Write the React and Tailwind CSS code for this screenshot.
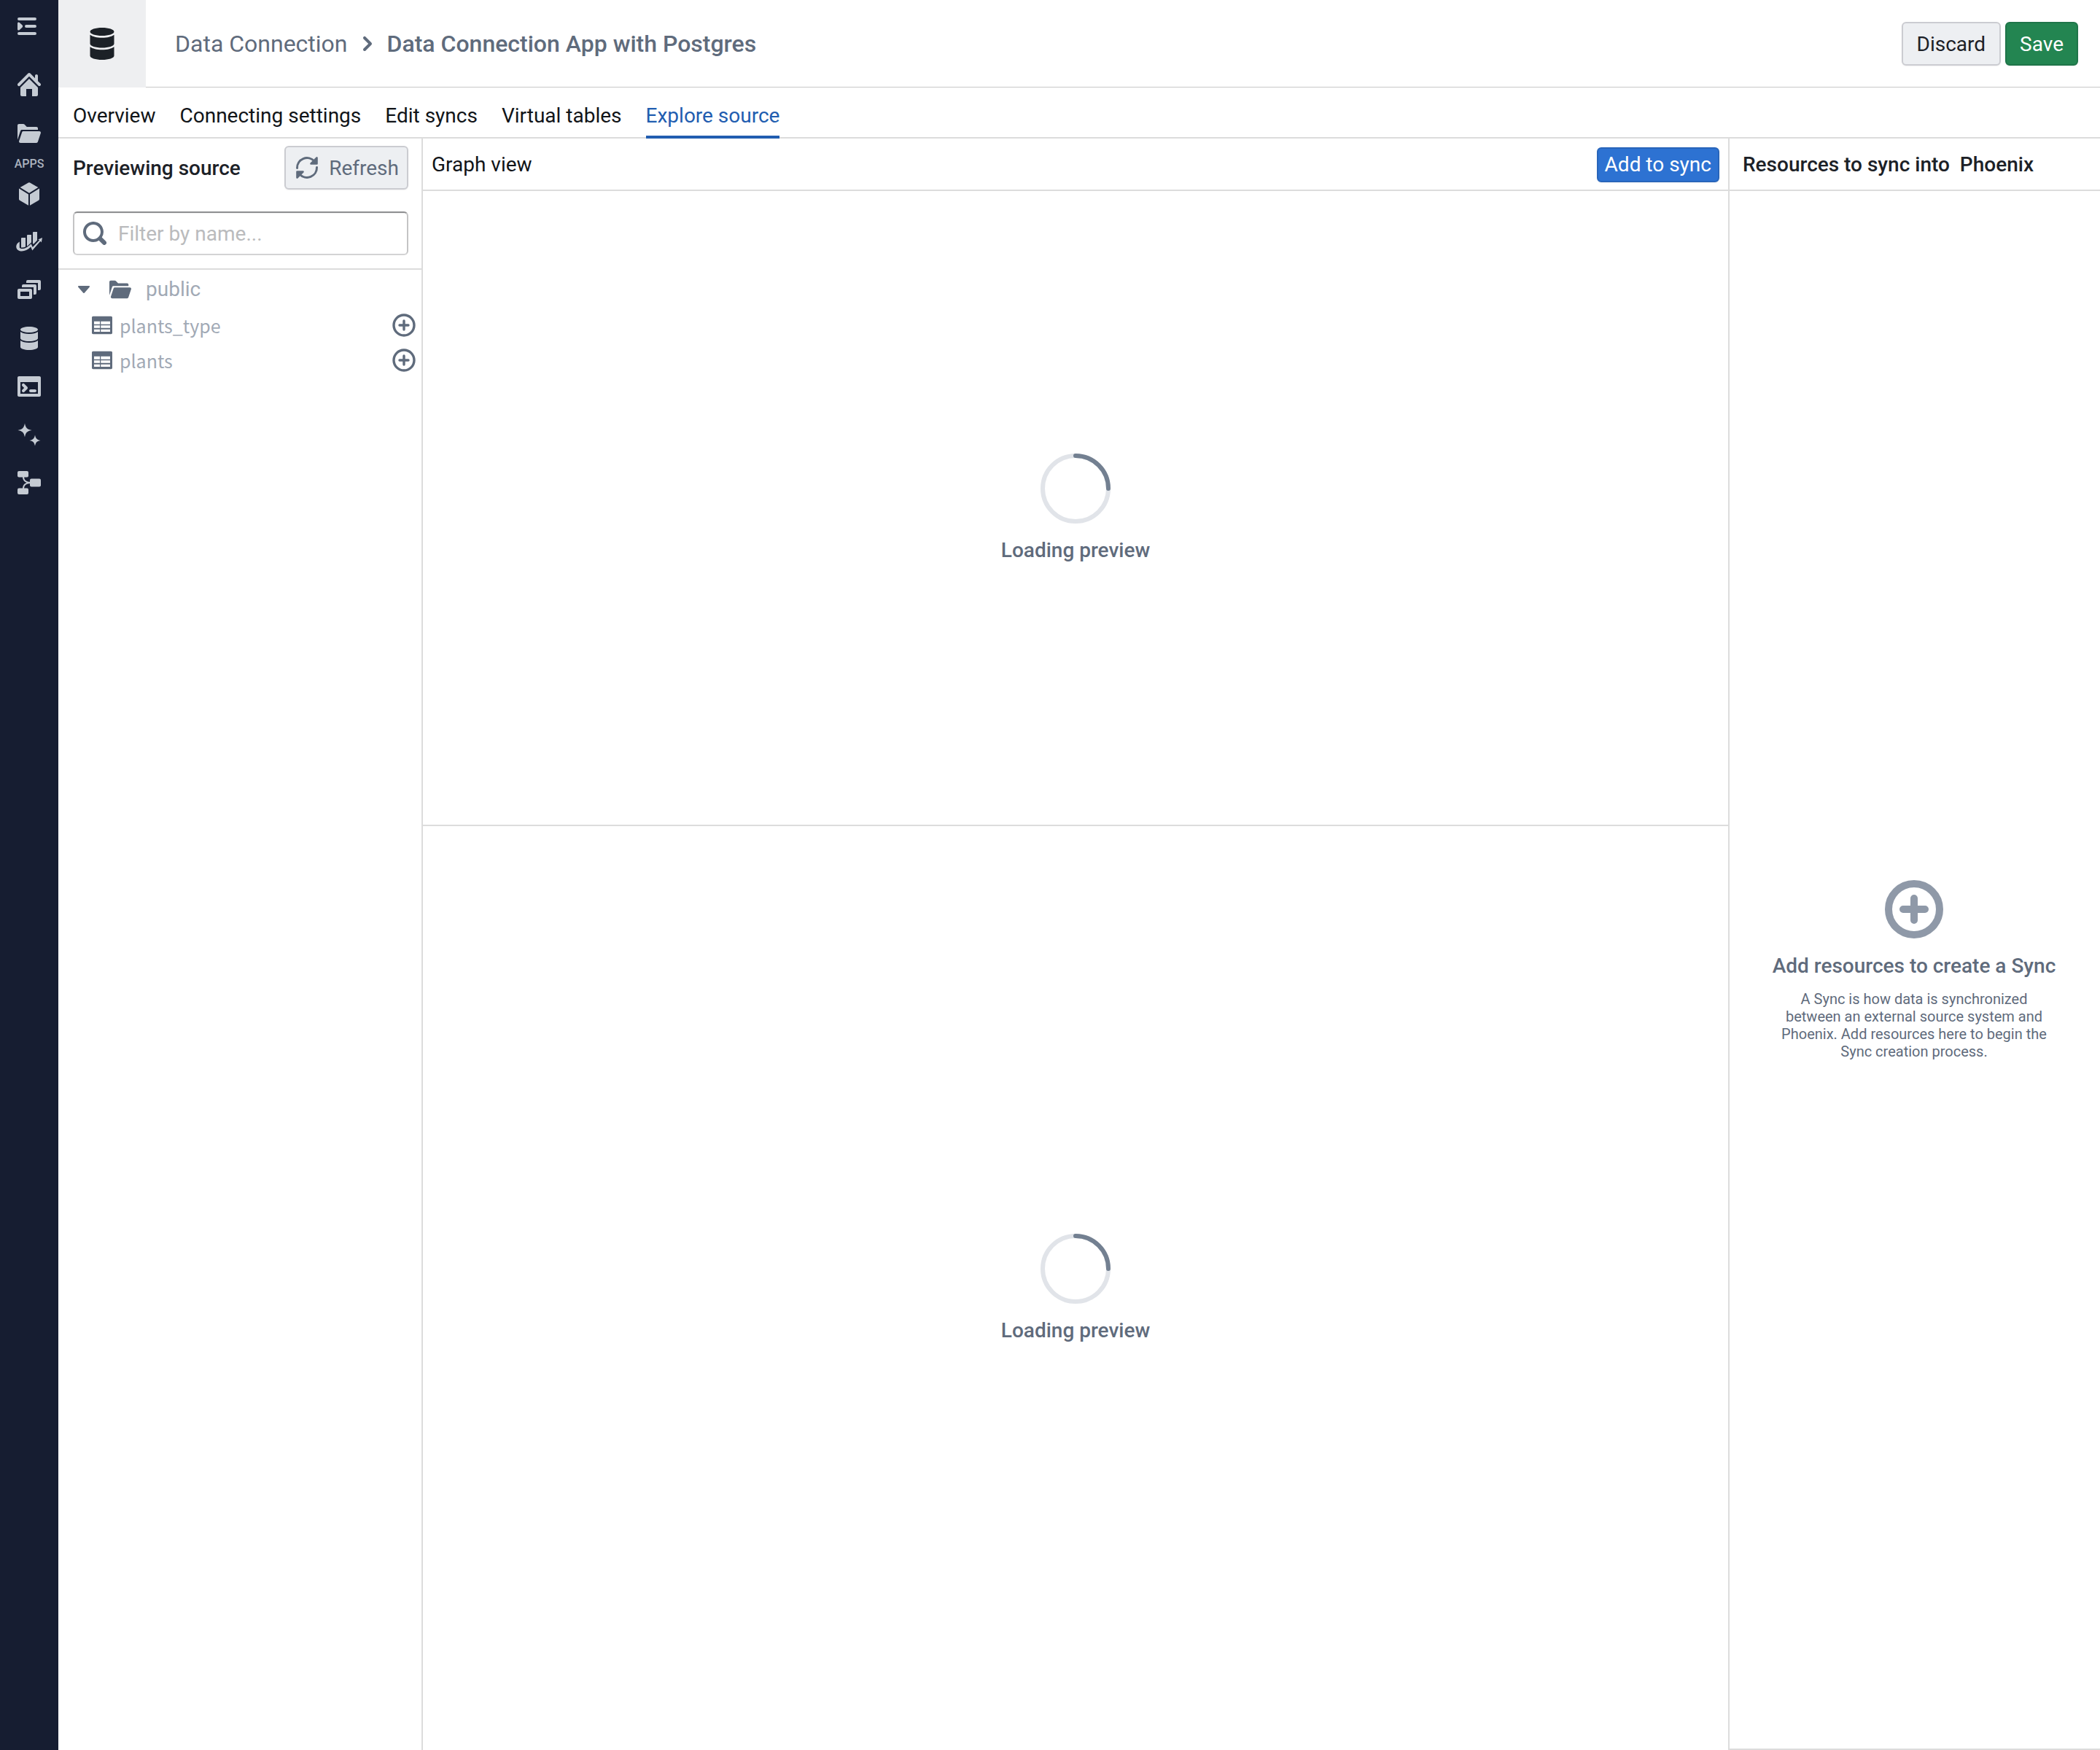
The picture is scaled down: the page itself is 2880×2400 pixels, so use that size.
const PATHS = {
  menu: "M1 0H12A1 1 0 0112 2H1A1 1 0 011 0zM6 5H12A1 1 0 0112 7H6A1 1 0 016 5zM1 10H12A1 1 0 0112 12H1A1 1 0 011 10zM0 4C0 3.2.9 3 1.4 3.5L3.3 5.3C3.7 5.7 3.7 6.3 3.3 6.7L1.4 8.5C.9 9 0 8.8 0 8z",
  home: "M2 10v5c0 .55.45 1 1 1h3v-5h4v5h3c.55 0 1-.45 1-1v-5L8 4l-6 6zm13.71-2.71L14 5.59V2c0-.55-.45-1-1-1s-1 .45-1 1v1.59L8.71.29C8.53.11 8.28 0 8 0s-.53.11-.71.29l-7 7a1.003 1.003 0 001.42 1.42L8 2.41l6.29 6.29c.18.18.43.3.71.3a1.003 1.003 0 00.71-1.71z",
  folder:
    "M2.06 6.69c.14-.4.5-.69.94-.69h11V5c0-.55-.45-1-1-1H6.41l-1.7-1.71A.997.997 0 004 2H1c-.55 0-1 .45-1 1v9.84l2.05-6.15h.01zM16 8c0-.55-.45-1-1-1H4a.99.99 0 00-.94.69l-2 6c-.04.09-.06.2-.06.31 0 .55.45 1 1 1h11c.44 0 .81-.29.94-.69l2-6c.04-.09.06-.2.06-.31z",
  cube: "M14.194 3.54L8 7.41 1.806 3.54 7.504.283a1 1 0 01.992 0l5.698 3.256zm.75.71c.037.118.056.242.056.369v6.899a1 1 0 01-.5.866l-6 3.496V8.27l6.444-4.02zM1.056 4.25L7.5 8.27v7.609l-6-3.496a1 1 0 01-.5-.866V4.62c0-.127.02-.251.056-.368z",
  windows:
    "M3 6V5a1 1 0 011-1h8a1 1 0 011 1v5a1 1 0 01-1 1h-1V6zM6 3V2a1 1 0 011-1h8a1 1 0 011 1v5a1 1 0 01-1 1h-1V3zM1 7h8a1 1 0 011 1v5a1 1 0 01-1 1H1a1 1 0 01-1-1V8a1 1 0 011-1zM2 9v3h6V9z",
  database:
    "M8 4c3.31 0 6-.9 6-2s-2.69-2-6-2C4.68 0 2 .9 2 2s2.68 2 6 2zm-6-.48V8c0 1.1 2.69 2 6 2s6-.9 6-2V3.52C12.78 4.4 10.56 5 8 5s-4.78-.6-6-1.48zm0 6V14c0 1.1 2.69 2 6 2s6-.9 6-2V9.52C12.78 10.4 10.56 11 8 11s-4.78-.6-6-1.48z",
  console:
    "M4 12c.28 0 .53-.11.71-.29l2-2C6.89 9.53 7 9.28 7 9s-.11-.53-.29-.71l-2-2a1.003 1.003 0 00-1.42 1.42L4.59 9l-1.3 1.29c-.18.18-.29.43-.29.71 0 .55.45 1 1 1zm5 0h3c.55 0 1-.45 1-1s-.45-1-1-1H9c-.55 0-1 .45-1 1s.45 1 1 1zm6-11H1c-.55 0-1 .45-1 1v12c0 .55.45 1 1 1h14c.55 0 1-.45 1-1V2c0-.55-.45-1-1-1zm-1 12H2V5h12v8z",
  sparkle:
    "M5 .2C5.6 3.4 6.6 4.4 9.8 5C6.6 5.6 5.6 6.6 5 9.8C4.4 6.6 3.4 5.6.2 5C3.4 4.4 4.4 3.4 5 .2zM12 8.2C12.5 10.7 13.3 11.5 15.8 12C13.3 12.5 12.5 13.3 12 15.8C11.5 13.3 10.7 12.5 8.2 12C10.7 11.5 11.5 10.7 12 8.2z",
  search:
    "M15.55 13.43l-2.67-2.68a6.94 6.94 0 001.11-3.76c0-3.87-3.13-7-7-7s-7 3.13-7 7 3.13 7 7 7c1.39 0 2.68-.42 3.76-1.11l2.68 2.67a1.498 1.498 0 102.12-2.12zm-8.56-1.44c-2.76 0-5-2.24-5-5s2.24-5 5-5 5 2.24 5 5-2.24 5-5 5z",
  caret:
    "M12 6.5c0-.28-.22-.5-.5-.5h-7a.495.495 0 00-.37.83l3.5 4c.09.1.22.17.37.17s.28-.07.37-.17l3.5-4c.08-.09.13-.2.13-.33z",
  table:
    "M15 1H1c-.6 0-1 .5-1 1v12c0 .6.4 1 1 1h14c.6 0 1-.4 1-1V2c0-.5-.4-1-1-1zM6.300 13.200H1.700v-1.900h4.600v1.900zm0-3H1.700V8.200h4.600v2zm0-2.900H1.700V5h4.600v2.300zm8 5.900H7v-1.900h7.300v1.900zm0-3H7V8.200h7.300v2zm0-2.900H7V5h7.300v2.300z",
  chevron:
    "M10.71 7.29l-4-4a1.003 1.003 0 00-1.42 1.42L8.59 8 5.3 11.29c-.19.18-.3.43-.3.71a1.003 1.003 0 001.71.71l4-4c.18-.18.29-.43.29-.71 0-.28-.11-.53-.29-.71z",
};

function Icon({ name, className = "size-8" }) {
  return (
    <svg viewBox="0 0 16 16" fill="currentColor" fillRule="evenodd" className={`shrink-0 ${className}`} aria-hidden="true">
      <path d={PATHS[name]} />
    </svg>
  );
}

function AddIcon({ className = "size-8", plusWidth = 2 }) {
  return (
    <svg viewBox="0 0 16 16" fill="none" stroke="currentColor" strokeWidth="2" strokeLinecap="round" className={`shrink-0 ${className}`} aria-hidden="true">
      <circle cx="8" cy="8" r="7" strokeWidth={plusWidth} />
      <path d="M8 5v6M5 8h6" strokeWidth={plusWidth} />
    </svg>
  );
}

function RefreshIcon() {
  return (
    <svg viewBox="0 0 32 32" fill="none" stroke="currentColor" strokeWidth="3" strokeLinecap="round" className="size-8 shrink-0" aria-hidden="true">
      <path d="M2.500 16.500A13.500 13.500 0 0126 7M29.500 15.500A13.500 13.500 0 016 25" />
      <path d="M29.500 2.500V10.500H21.500zM2.500 29.500V21.500H10.500z" fill="currentColor" strokeLinejoin="round" strokeWidth="2.600" />
    </svg>
  );
}

function ChartIcon() {
  return (
    <svg viewBox="0 0 36 28" fill="currentColor" className="h-7 w-9 shrink-0" aria-hidden="true">
      <path d="M7 9Q7 8 8 8H13V20.500Q10 21.800 7 21.500zM15 5Q15 4 16 4H21V14.500L15.800 19.300 15 19.500zM23 1Q23 0 24 0H29V11.500L23.800 17 23 15.500z" />
      <path d="M4.800 13.500V21.500C7 24.500 14 23.500 20.600 16.200L22.800 21 32.200 11.200 30.200 10.400 36 8 34.800 14.500 33.400 12.800 22.300 25.500 20.200 20.600C15 26 9 27.500 4.500 26C-1 24-1.500 17 4.800 13.500z" />
    </svg>
  );
}

function LineageIcon() {
  return (
    <svg viewBox="0 0 32 32" fill="currentColor" className="size-8 shrink-0" aria-hidden="true">
      <rect width="15" height="8.500" rx="2" />
      <rect x="17" y="10.500" width="15" height="11" rx="2" />
      <rect y="23.500" width="15" height="8.500" rx="2" />
      <path d="M8 8C8 13 12 16 18 16C12 16 8 19 8 24" fill="none" stroke="currentColor" strokeWidth="2" />
    </svg>
  );
}

function RailLink({ label, children }) {
  return (
    <a href="#" aria-label={label} className="flex h-[66px] w-full items-center justify-center">
      {children}
    </a>
  );
}

function Rail() {
  return (
    <nav aria-label="Main" className="flex w-20 shrink-0 flex-col items-center bg-[#161d31] text-[#c5cbd3]">
      <button type="button" aria-label="Expand sidebar" className="mt-6 mb-[35px] flex h-6 w-8">
        <svg viewBox="0 0 13 12" fill="currentColor" className="h-6 w-[26px]" aria-hidden="true">
          <path d={PATHS.menu} />
        </svg>
      </button>
      <RailLink label="Home"><Icon name="home" /></RailLink>
      <RailLink label="Files"><Icon name="folder" /></RailLink>
      <span className="h-[18px] text-base leading-5 font-medium text-[#abb3bf]">APPS</span>
      <RailLink label="Objects"><Icon name="cube" /></RailLink>
      <RailLink label="Analysis"><ChartIcon /></RailLink>
      <RailLink label="Workspaces"><Icon name="windows" /></RailLink>
      <RailLink label="Data"><Icon name="database" /></RailLink>
      <RailLink label="Console"><Icon name="console" /></RailLink>
      <RailLink label="Assist"><Icon name="sparkle" /></RailLink>
      <RailLink label="Lineage"><LineageIcon /></RailLink>
    </nav>
  );
}

function Header() {
  return (
    <header className="flex h-[120px] shrink-0">
      <div className="flex w-[120px] items-center justify-center bg-[#eeeff1] text-[#1c2127]">
        <Icon name="database" className="size-11" />
      </div>
      <div className="flex flex-1 items-center border-b border-[#c8c8c8] pr-[30px] pl-10 text-[32px] leading-10 text-[#5f6b7c]">
        <a href="#">Data Connection</a>
        <Icon name="chevron" className="mx-[11px] size-8" />
        <h1 className="font-medium">Data Connection App with Postgres</h1>
        <div className="ml-auto flex gap-1.5 text-[28px] leading-8">
          <button type="button" className="h-[60px] rounded-md border-2 border-[#cbccd1] bg-[#edeff2] px-[19px] pt-0.5 text-[#1c2127] shadow-xs">
            Discard
          </button>
          <button type="button" className="h-[60px] rounded-md border-2 border-[#1f7549] bg-[#238551] px-[18px] pt-0.5 text-white shadow-xs">
            Save
          </button>
        </div>
      </div>
    </header>
  );
}

const TABS = ["Overview", "Connecting settings", "Edit syncs", "Virtual tables", "Explore source"];

function Tabs() {
  return (
    <nav aria-label="Source" className="flex h-[70px] shrink-0 gap-[33px] border-b-2 border-[#dcdcdc] px-5">
      {TABS.map((tab) => (
        <a
          key={tab}
          href="#"
          aria-current={tab === "Explore source" ? "page" : undefined}
          className="-mb-0.5 flex items-center border-b-4 border-transparent pt-3 text-[#111418] aria-[current=page]:border-b-[#215db0] aria-[current=page]:text-[#215db0]"
        >
          {tab}
        </a>
      ))}
    </nav>
  );
}

function TableRow({ name }) {
  return (
    <li className="flex h-12 items-center pr-2 pl-[46px]">
      <Icon name="table" className="size-7" />
      <span className="ml-2.5 font-['Noto_Sans_CJK_SC',sans-serif] text-[25px] text-[#a1a9b5]">{name}</span>
      <button type="button" aria-label={`Add ${name}`} className="ml-auto">
        <AddIcon plusWidth={1.7} />
      </button>
    </li>
  );
}

function SourcePanel() {
  return (
    <aside className="w-[500px] shrink-0 border-r-2 border-[#dcdcdc] text-[#5f6b7c]">
      <div className="flex flex-col gap-[30px] border-b-2 border-[#dcdcdc] px-5 pt-2.5 pr-[18px] pb-[18px]">
        <div className="flex items-center justify-between">
          <h2 className="pt-0.5 font-medium text-[#1c2127]">Previewing source</h2>
          <button type="button" className="flex h-[60px] items-center gap-3.5 rounded-md border-2 border-[#cbccd1] bg-[#edeff2] pr-[11px] pl-[13px] shadow-xs">
            <RefreshIcon />
            <span className="pt-0.5">Refresh</span>
          </button>
        </div>
        <label className="flex h-[60px] items-center gap-4 rounded-md border-2 border-[#c4c4c5] border-t-[#8e8f91] border-b-[#d3d3d4] px-3 inset-shadow-2xs">
          <Icon name="search" />
          <input type="text" aria-label="Filter by name" placeholder="Filter by name..." className="w-full min-w-0 pt-0.5 text-[#1c2127] outline-none placeholder:text-[#babbbd]" />
        </label>
      </div>
      <div className="flex h-[52px] items-center pl-[19px]">
        <button type="button" aria-label="Collapse public">
          <Icon name="caret" />
        </button>
        <Icon name="folder" className="ml-[19px] size-[30px]" />
        <span className="ml-5 pt-0.5 text-[#a1a9b5]">public</span>
      </div>
      <ul>
        <TableRow name="plants_type" />
        <TableRow name="plants" />
      </ul>
    </aside>
  );
}

function Loading() {
  return (
    <div role="status" className="flex flex-col items-center gap-[19px] pb-0.5 font-medium text-[#5f6b7c]">
      <svg viewBox="0 0 100 100" fill="none" strokeWidth="6" strokeLinecap="round" className="size-[100px]" aria-hidden="true">
        <circle cx="50" cy="50" r="45" stroke="#e1e4e9" />
        <path d="M50 5A45 45 0 0195 50" stroke="#738091" />
      </svg>
      Loading preview
    </div>
  );
}

function GraphPanel() {
  return (
    <main className="flex flex-1 flex-col">
      <div className="flex h-[72px] items-center justify-between border-b-2 border-[#dcdcdc] px-3 pt-0.5">
        <h2 className="text-[#111418]">Graph view</h2>
        <button type="button" className="h-12 rounded-md border-2 border-[#2865ba] bg-[#2d72d2] px-[9px] text-white shadow-xs">
          Add to sync
        </button>
      </div>
      <section className="flex flex-[435] items-center justify-center border-b-2 border-[#dcdcdc]">
        <Loading />
      </section>
      <section className="flex flex-[634] items-center justify-center">
        <Loading />
      </section>
    </main>
  );
}

function SyncPanel() {
  return (
    <aside className="flex w-[510px] shrink-0 flex-col border-b-2 border-l-2 border-[#dcdcdc]">
      <div className="flex h-[72px] items-center border-b-2 border-[#dcdcdc] px-[18px] pt-0.5">
        <h2 className="flex gap-3.5 font-medium text-[#1c2127]">
          <span>Resources to sync into</span>
          <span>Phoenix</span>
        </h2>
      </div>
      <div className="flex flex-1 flex-col items-center justify-center pr-0.5 text-center text-[#5f6b7c]">
        <AddIcon className="size-20 text-[#8f99a8]" />
        <h3 className="mt-[22px] font-medium">Add resources to create a Sync</h3>
        <p className="mt-[17px] w-[370px] text-xl leading-6">
          A Sync is how data is synchronized between an external source system and Phoenix. Add resources here to begin the Sync creation process.
        </p>
      </div>
    </aside>
  );
}

export default function App() {
  return (
    <div className="flex min-h-screen bg-white font-[Roboto,sans-serif] text-[28px] leading-8">
      <Rail />
      <div className="flex min-w-0 flex-1 flex-col">
        <Header />
        <Tabs />
        <div className="flex flex-1">
          <SourcePanel />
          <GraphPanel />
          <SyncPanel />
        </div>
      </div>
    </div>
  );
}
